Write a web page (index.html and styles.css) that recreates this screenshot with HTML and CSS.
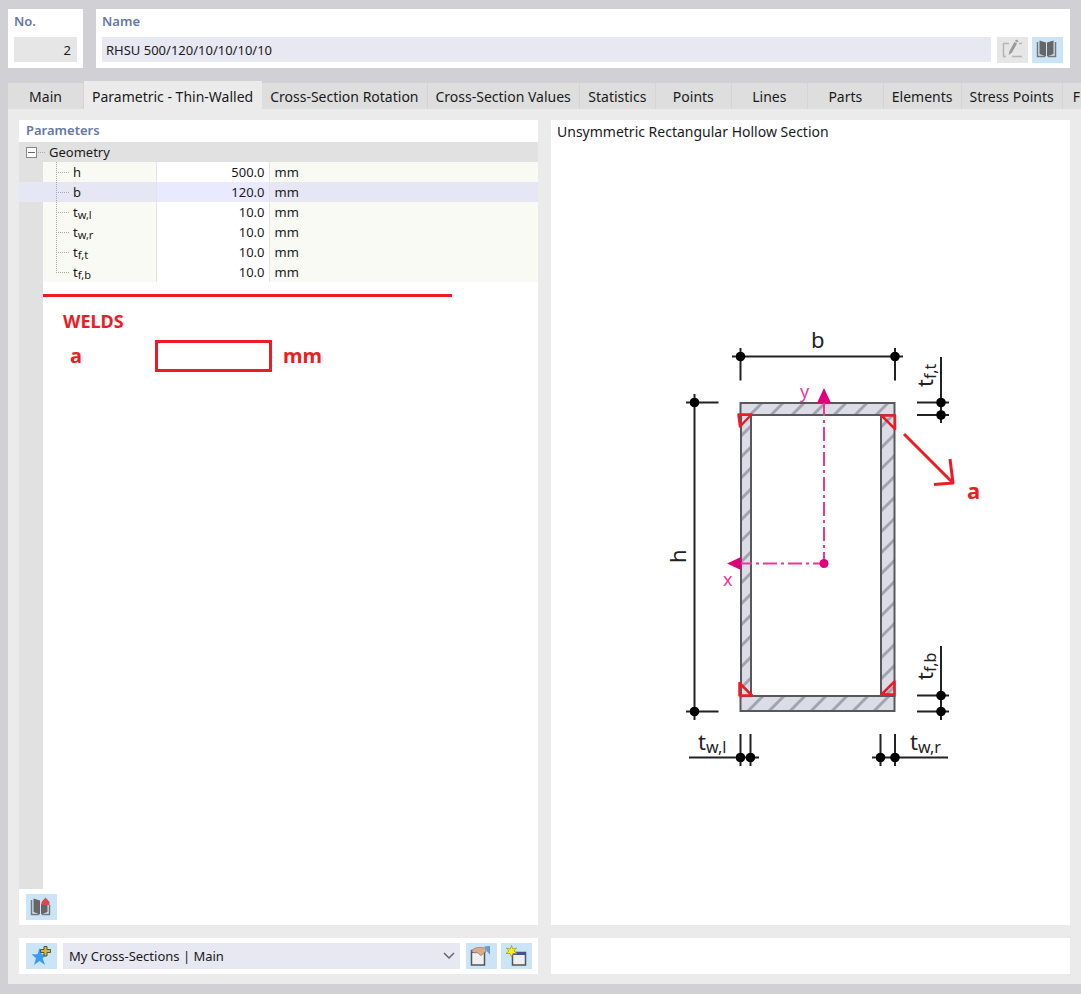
FILE: index.html
```html
<!DOCTYPE html>
<html lang="en">
<head>
    <meta charset="UTF-8">
    <meta name="viewport" content="width=device-width, initial-scale=1.0">
    <title>Edit Cross-Section</title>
    <link rel="stylesheet" href="styles.css">
</head>
<body>
    <div class="dialog">
        <header class="header">
            <div class="box box-no">
                <label class="title" for="no">No.</label>
                <input class="field field-no" id="no" type="text" value="2" readonly>
            </div>
            <div class="box box-name">
                <label class="title" for="name">Name</label>
                <div class="row">
                    <input class="field" id="name" type="text" value="RHSU 500/120/10/10/10/10">
                    <div class="buttons">
                        <button class="icon-button" type="button" aria-label="Edit name" disabled>
                            <svg width="31" height="26" viewBox="0 0 31 26" fill="none">
                                <path d="M12 6.500H6.500V19.500H9M22 6.500H25M15 19.500H25" stroke="#b4b4b4" stroke-width="1.500"/>
                                <path d="M11.500 18l1-4 5-9 2.500 1.500-5 9z" fill="#999"/>
                                <path d="M18 4l1-1.500 2.500 1.500-1 1.500z" fill="#999"/>
                            </svg>
                        </button>
                        <button class="icon-button" type="button" aria-label="Library">
                            <svg width="31" height="26" viewBox="0 0 31 26">
                                <path d="M7.500 3.500L14 5.500V19.500L7.500 17zM21.500 3.500L15 5.500V19.500L21.500 17z" fill="#666"/>
                                <path d="M5.500 5V19.500H13M23.500 5V19.500H16" fill="none" stroke="#777" stroke-width="1.500"/>
                            </svg>
                        </button>
                    </div>
                </div>
            </div>
        </header>

        <nav class="tabs">
            <button class="tab" type="button">Main</button>
            <button class="tab active" type="button">Parametric - Thin-Walled</button>
            <button class="tab" type="button">Cross-Section Rotation</button>
            <button class="tab" type="button">Cross-Section Values</button>
            <button class="tab" type="button">Statistics</button>
            <button class="tab" type="button">Points</button>
            <button class="tab" type="button">Lines</button>
            <button class="tab" type="button">Parts</button>
            <button class="tab" type="button">Elements</button>
            <button class="tab" type="button">Stress Points</button>
            <button class="tab" type="button">FE Mesh</button>
        </nav>

        <main class="content">
            <section class="panel">
                <h2 class="title panel-title">Parameters</h2>
                <div class="tree">
                    <table class="params">
                        <colgroup>
                            <col class="col-gutter">
                            <col class="col-name">
                            <col class="col-value">
                            <col>
                        </colgroup>
                        <thead>
                            <tr class="group">
                                <th colspan="4">
                                    <div class="group-name">
                                        <button class="toggle" type="button" aria-label="Collapse Geometry"></button>
                                        <i class="group-line"></i>
                                        <span>Geometry</span>
                                    </div>
                                </th>
                            </tr>
                        </thead>
                        <tbody>
                            <tr>
                                <td></td>
                                <td class="name"><div class="name-cell"><i class="branch"></i><label for="h">h</label></div></td>
                                <td class="value"><input id="h" type="text" value="500.0"></td>
                                <td class="unit">mm</td>
                            </tr>
                            <tr class="selected">
                                <td></td>
                                <td class="name"><div class="name-cell"><i class="branch"></i><label for="b">b</label></div></td>
                                <td class="value"><input id="b" type="text" value="120.0"></td>
                                <td class="unit">mm</td>
                            </tr>
                            <tr>
                                <td></td>
                                <td class="name"><div class="name-cell"><i class="branch"></i><label for="twl">t<sub>w,l</sub></label></div></td>
                                <td class="value"><input id="twl" type="text" value="10.0"></td>
                                <td class="unit">mm</td>
                            </tr>
                            <tr>
                                <td></td>
                                <td class="name"><div class="name-cell"><i class="branch"></i><label for="twr">t<sub>w,r</sub></label></div></td>
                                <td class="value"><input id="twr" type="text" value="10.0"></td>
                                <td class="unit">mm</td>
                            </tr>
                            <tr>
                                <td></td>
                                <td class="name"><div class="name-cell"><i class="branch"></i><label for="tft">t<sub>f,t</sub></label></div></td>
                                <td class="value"><input id="tft" type="text" value="10.0"></td>
                                <td class="unit">mm</td>
                            </tr>
                            <tr>
                                <td></td>
                                <td class="name"><div class="name-cell"><i class="branch last"></i><label for="tfb">t<sub>f,b</sub></label></div></td>
                                <td class="value"><input id="tfb" type="text" value="10.0"></td>
                                <td class="unit">mm</td>
                            </tr>
                        </tbody>
                    </table>
                    <div class="welds">
                        <h3>WELDS</h3>
                        <div class="weld-row">
                            <label for="a">a</label>
                            <input id="a" type="text">
                            <span>mm</span>
                        </div>
                    </div>
                </div>
                <div class="toolbar">
                    <button class="icon-button" type="button" aria-label="Save to library">
                        <svg width="31" height="26" viewBox="0 0 31 26">
                            <path d="M7.500 4.500L14 6.500V20.500L7.500 18zM21.500 9L15 10V20.500L21.500 18z" fill="#666"/>
                            <path d="M5.500 6V20.500H13M23.500 11V20.500H16" fill="none" stroke="#777" stroke-width="1.500"/>
                            <path d="M19.500 3.500L23.500 8V11H15.500V8z" fill="#d9484e"/>
                        </svg>
                    </button>
                </div>
            </section>

            <section class="panel">
                <h2 class="caption">Unsymmetric Rectangular Hollow Section</h2>
                <div class="drawing">
                    <svg width="381" height="480" viewBox="620 310 381 480" role="img" aria-label="Section with dimensions">
                        <defs>
                            <pattern id="hatch" width="21" height="21" patternUnits="userSpaceOnUse" patternTransform="translate(10 0)">
                                <path d="M-5 26L26 -5M-5 5L5 -5M16 26L26 16" stroke="#a3a3af" stroke-width="3"/>
                            </pattern>
                            <pattern id="hatchLeft" href="#hatch" patternTransform="translate(1 0)"/>
                            <pattern id="hatchRight" href="#hatch" patternTransform="translate(6 0)"/>
                            <marker id="dot" markerWidth="10" markerHeight="10" refX="5" refY="5" markerUnits="userSpaceOnUse">
                                <circle cx="5" cy="5" r="4.800"/>
                            </marker>
                        </defs>

                        <!-- plates -->
                        <g fill="#dcdce7">
                            <path d="M740 402H895V415H740zM740 695H895V712H740zM740 415H751V695H740zM881 415H895V695H881z"/>
                        </g>
                        <g stroke="#58585c" stroke-width="2">
                            <path d="M740.500 403H894.500V415H740.500zM740.500 696H894.500V711H740.500z" fill="url(#hatch)"/>
                            <path d="M741 415V696H751V415z" fill="url(#hatchLeft)"/>
                            <path d="M881 415V696H894.500V415z" fill="url(#hatchRight)"/>
                        </g>

                        <!-- dimension lines -->
                        <g stroke="#222" stroke-width="2" fill="none">
                            <path d="M732 356.500H903M740.500 348V380.500M895 348V380.500"/>
                            <path d="M694.500 394V720M686 402.500H718.500M686 711.500H718.500"/>
                            <path d="M941 357V423M917 402.500H949M917 415H949"/>
                            <path d="M941 646V720M917 695.500H949M917 711.500H949"/>
                            <path d="M689 757.500H759M740.500 734V766M750.500 734V766"/>
                            <path d="M872 757.500H948M880.500 734V766M895 734V766"/>
                        </g>
                        <g stroke="none" fill="none">
                            <path d="M740.500 356.500H895" marker-start="url(#dot)" marker-end="url(#dot)"/>
                            <path d="M694.500 402.500V711.500" marker-start="url(#dot)" marker-end="url(#dot)"/>
                            <path d="M941 402.500V415" marker-start="url(#dot)" marker-end="url(#dot)"/>
                            <path d="M941 695.500V711.500" marker-start="url(#dot)" marker-end="url(#dot)"/>
                            <path d="M740.500 757.500H750.500" marker-start="url(#dot)" marker-end="url(#dot)"/>
                            <path d="M880.500 757.500H895" marker-start="url(#dot)" marker-end="url(#dot)"/>
                        </g>
                        <g class="dim">
                            <text x="811" y="348">b</text>
                            <text transform="translate(686 563) rotate(-90)">h</text>
                            <text transform="translate(933 387) rotate(-90)">t<tspan class="index" dy="3">f,t</tspan></text>
                            <text transform="translate(933 680) rotate(-90)">t<tspan class="index" dy="3">f,b</tspan></text>
                            <text x="698" y="750">t<tspan class="index" dy="3">w,l</tspan></text>
                            <text x="910" y="750">t<tspan class="index" dy="3">w,r</tspan></text>
                        </g>

                        <!-- axes -->
                        <g stroke="#e8399b" stroke-width="2" stroke-dasharray="14 4 3 4">
                            <path d="M824 563V403" stroke-dashoffset="3"/>
                            <path d="M824 563.500H741" stroke-dashoffset="3"/>
                        </g>
                        <path d="M824 388L831 403H817zM727 563.500L741 557V570z" fill="#e0007a"/>
                        <circle cx="824" cy="563.500" r="4.500" fill="#e0007a"/>
                        <g class="axis">
                            <text x="800" y="398">y</text>
                            <text x="723" y="586">x</text>
                        </g>

                        <!-- welds -->
                        <g stroke="#ed1c24" stroke-width="2.500" stroke-linejoin="round" fill="none">
                            <path d="M738.500 414.500H751.500L740 426.500z"/>
                            <path d="M881.500 415.500H895V429z"/>
                            <path d="M739.500 683V695.500H752z"/>
                            <path d="M894.500 681.500V694.500H881.500z"/>
                            <path d="M904 434L953 483M950 459L953 483L934 484.500" stroke-width="3"/>
                        </g>
                        <text class="weld-label" x="967" y="499">a</text>
                    </svg>
                </div>
            </section>

            <section class="panel toolbar">
                <button class="icon-button" type="button" aria-label="Add to favorites">
                    <svg width="31" height="26" viewBox="0 0 31 26">
                        <path d="M13.500 5L15.700 11.300H21L16.700 15.200L19 22L13.500 18L8 22L10 15.200L5.500 11.300H11.500z" fill="#3a9bf5"/>
                        <path d="M18 3.500H21V6.500H24.500V9.500H21V13H18V9.500H14.500V6.500H18z" fill="#c9b84a" stroke="#5c5526"/>
                    </svg>
                </button>
                <div class="select">
                    <select aria-label="Favorites group">
                        <option>My Cross-Sections | Main</option>
                    </select>
                    <svg class="chevron" width="12" height="8" viewBox="0 0 12 8">
                        <path d="M1 1L6 6L11 1" fill="none" stroke="#666" stroke-width="1.500"/>
                    </svg>
                </div>
                <div class="buttons">
                    <button class="icon-button" type="button" aria-label="Edit favorites">
                        <svg width="31" height="26" viewBox="0 0 31 26">
                            <path d="M5.500 7.500H18.500V22H5.500z" fill="#f0f0f0" stroke="#555" stroke-width="1.500"/>
                            <path d="M6 7H18V10H6z" fill="#3c4ba8"/>
                            <path d="M5.500 8C8 5 11 4 15 4.500L20 5V9C17 9 18 12 14.500 12.500L12 10L7 9.500z" fill="#dba98b" stroke="#8e6e58" stroke-width=".6"/>
                            <path d="M18 3.500L24 3V12C22 9 20 8 20 5z" fill="#5b9be0"/>
                        </svg>
                    </button>
                    <button class="icon-button" type="button" aria-label="New favorites group">
                        <svg width="31" height="26" viewBox="0 0 31 26">
                            <path d="M11.500 9.500H24.500V22H11.500z" fill="#f0f0f0" stroke="#555" stroke-width="1.500"/>
                            <path d="M12 9.500H24V12H12z" fill="#3c4fc0"/>
                            <path d="M10.500 2.500L11.800 6L15.500 5L13 8L16 10.500L12 10.500L10.500 14L9 10.500L5 10.500L8 8L5.500 5L9.200 6z" fill="#f6ef1c" stroke="#9a9620" stroke-width=".7"/>
                        </svg>
                    </button>
                </div>
            </section>

            <section class="panel"></section>
        </main>
    </div>
</body>
</html>
```
FILE: styles.css
```css
* {
    box-sizing: border-box;
}

body {
    margin: 0;
    background-color: #fff;
    color: #1a1a1a;
    font-family: "Noto Sans", sans-serif;
    font-size: 13px;
    line-height: 20px;
}

input,
select,
button {
    font: inherit;
    color: inherit;
    border: none;
    border-radius: 0;
    margin: 0;
    padding: 0;
}

svg {
    display: block;
}

.dialog {
    display: flex;
    flex-direction: column;
    height: calc(100vh - 13px);
    min-height: 700px;
    padding: 9px 0 10px 8px;
    background-color: #d1d0d5;
    overflow: hidden;
}

.header {
    display: flex;
    gap: 13px;
    margin-right: 11px;
}

.box {
    display: flex;
    flex-direction: column;
    height: 59px;
    padding: 2px 6px 6px;
    background-color: #fff;
}

.box-no {
    width: 75px;
}

.box-name {
    flex: 1;
    padding-right: 7px;
}

.title {
    margin: 0;
    font-size: 13px;
    font-weight: 600;
    line-height: 20px;
    color: #6678a8;
}

.row {
    display: flex;
    gap: 6px;
    margin-top: 6px;
}

.field {
    flex: 1;
    min-width: 0;
    height: 25px;
    padding: 0 4px;
    background-color: #e8e8f3;
}

.field-no {
    flex: none;
    width: 100%;
    margin-top: 6px;
    padding-right: 6px;
    background-color: #e6e6e6;
    text-align: right;
}

.buttons {
    display: flex;
    gap: 4px;
}

.icon-button {
    flex: none;
    width: 31px;
    height: 26px;
    background-color: #cce4f7;
}

.icon-button:disabled {
    background-color: #e6e6e6;
}

.tabs {
    display: flex;
    align-items: flex-end;
    margin-top: 13px;
}

.tab {
    flex: none;
    min-width: 76px;
    height: 26px;
    padding: 1px 8px 0;
    background-color: #dedede;
    border-right: 1px solid #d4d4d4;
    font-size: 14px;
    white-space: nowrap;
}

.tab.active {
    height: 28px;
    padding-top: 3px;
    background-color: #ebebeb;
    border-right-color: #ebebeb;
}

.content {
    flex: 1;
    display: grid;
    grid-template-columns: 1fr 1fr;
    grid-template-rows: 1fr 36px;
    gap: 13px;
    padding: 11px 11px 10px;
    background-color: #ebebeb;
}

.panel {
    display: flex;
    flex-direction: column;
    min-width: 0;
    background-color: #fff;
}

.panel-title {
    padding: 0 7px 2px;
}

.tree {
    flex: 1;
    background: linear-gradient(to right, #e1e1e1 24px, #fff 24px);
}

.params {
    width: 100%;
    border-collapse: collapse;
    table-layout: fixed;
}

.col-gutter {
    width: 24px;
}

.col-name {
    width: 113px;
}

.col-value {
    width: 113px;
}

.params td,
.params th {
    height: 20px;
    padding: 0;
    font-weight: normal;
    text-align: left;
}

.group {
    background-color: #e1e1e1;
}

.group-name {
    display: flex;
    align-items: center;
    padding-left: 7px;
}

.toggle {
    width: 11px;
    height: 11px;
    border: 1px solid #888;
    background: linear-gradient(#666, #666) center / 7px 1px no-repeat #fff;
}

.group-line {
    width: 8px;
    height: 1px;
    margin: 0 3px 0 1px;
    background: repeating-linear-gradient(to right, #aaa 0 1px, transparent 1px 2px);
}

.params .name {
    background-color: #f9faf4;
    border-right: 1px solid #e3e3e3;
}

.params .value {
    background-color: #fff;
    border-right: 1px solid #e3e3e3;
}

.value input {
    display: block;
    width: 100%;
    height: 20px;
    padding-right: 4px;
    background: none;
    text-align: right;
}

.params .unit {
    padding-left: 5px;
    background-color: #f9faf4;
}

.params .selected td {
    background-color: #e6e6f4;
}

.params .selected .value {
    background-color: #e9e9ff;
}

.name-cell {
    display: flex;
    height: 20px;
    padding-left: 13px;
}

.name-cell sub {
    font-size: 11px;
    line-height: 1px;
    vertical-align: -2px;
}

.branch {
    width: 17px;
    background:
        repeating-linear-gradient(to right, #aaa 0 1px, transparent 1px 2px) 0 10px / 14px 1px no-repeat,
        repeating-linear-gradient(to bottom, #aaa 0 1px, transparent 1px 2px) 0 0 / 1px 20px no-repeat;
}

.branch.last {
    background-size: 14px 1px, 1px 10px;
}

.welds {
    max-width: 409px;
    margin: 12px 0 0 24px;
    padding-left: 20px;
    border-top: 3px solid #ed1c24;
    color: #ed1c24;
    font-size: 20px;
    font-weight: 700;
}

.welds h3 {
    margin: 14px 0 9px;
    font-size: 18px;
}

.weld-row {
    display: flex;
    align-items: center;
}

.weld-row label {
    width: 92px;
    padding-left: 7px;
}

.weld-row input {
    width: 117px;
    height: 32px;
    margin-right: 11px;
    padding: 0 6px;
    border: 3px solid #ed1c24;
    background-color: #fff;
}

.toolbar {
    display: flex;
    flex-direction: row;
    gap: 6px;
    padding: 5px 6px 5px 7px;
}

.select {
    position: relative;
    flex: 1;
}

.select select {
    width: 100%;
    height: 26px;
    padding: 0 24px 0 6px;
    background-color: #e8e8f3;
    appearance: none;
}

.chevron {
    position: absolute;
    top: 9px;
    right: 5px;
    pointer-events: none;
}

.caption {
    margin: 0;
    padding: 2px 6px;
    font-size: 14px;
    font-weight: normal;
}

.drawing {
    flex: 1;
    display: flex;
    align-items: center;
    justify-content: center;
    padding-top: 30px;
}

.dim {
    fill: #222;
    font-size: 22px;
}

.dim .index {
    font-size: 16px;
}

.axis {
    fill: #e8399b;
    font-size: 18px;
}

.weld-label {
    fill: #ed1c24;
    font-size: 22px;
    font-weight: 700;
}
```
